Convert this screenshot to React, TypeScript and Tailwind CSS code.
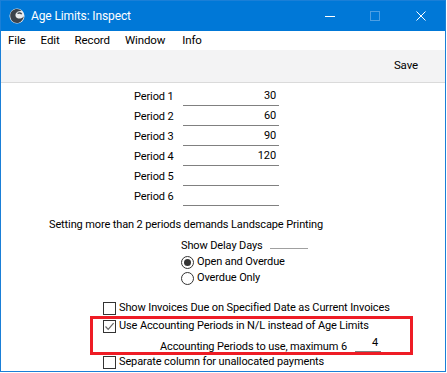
import React from "react";

const periods = [
  { label: "Period 1", value: "30" },
  { label: "Period 2", value: "60" },
  { label: "Period 3", value: "90" },
  { label: "Period 4", value: "120" },
  { label: "Period 5", value: "" },
  { label: "Period 6", value: "" },
];

const menus = [
  { label: "File", x: "ml-[7px]" },
  { label: "Edit", x: "ml-[15px]" },
  { label: "Record", x: "ml-[15px]" },
  { label: "Window", x: "ml-[15px]" },
  { label: "Info", x: "ml-[17px]" },
];

function AppIcon() {
  return (
    <svg width="16" height="16" viewBox="0 0 16 16">
      <circle cx="8" cy="8" r="7.5" fill="#e9ecef" />
      <path d="M1.2 7 C1.5 3.5 4.5 1 8 1 C10 1 11.5 1.8 12.5 3 C10.5 2.6 8 3.4 6.8 5.4 C5.8 7.4 6.8 9.8 9.2 10.4 C11.4 11 13.6 9.8 14.8 8.2 C14.3 12 11.3 15 8 15 C4.2 15 1 12 1.2 7 Z" fill="#3d434b" />
      <path d="M8.5 5.5 C10 4.6 12 5 12.6 6.2" fill="none" stroke="#3d434b" strokeWidth="1.4" />
    </svg>
  );
}

function Checkbox({ checked }: { checked?: boolean }) {
  return (
    <div className="flex h-[13px] w-[13px] shrink-0 items-center justify-center border border-[#333333] bg-white">
      {checked ? (
        <svg width="11" height="11" viewBox="0 0 11 11">
          <path d="M1.5 5.5 L4.2 8.3 L9.6 2.2" fill="none" stroke="#666666" strokeWidth="1.2" />
        </svg>
      ) : null}
    </div>
  );
}

function Radio({ selected }: { selected?: boolean }) {
  return (
    <div className="flex h-[13px] w-[13px] shrink-0 items-center justify-center rounded-full border border-[#333333] bg-white">
      {selected ? <div className="h-[7px] w-[7px] rounded-full bg-[#333333]" /> : null}
    </div>
  );
}

export default function App() {
  return (
    <div
      className="relative h-[372px] w-[446px] border border-[#1a7fd7] bg-white text-[11px] tracking-[-0.12px] text-black"
      style={{ fontFamily: 'Roboto, "Noto Sans", sans-serif' }}
    >
      {/* title bar */}
      <div className="flex h-[30px] items-center bg-[#0078d7] text-white">
        <div className="ml-[8px]">
          <AppIcon />
        </div>
        <span className="ml-[6px] text-[12px]">Age Limits: Inspect</span>
        <div className="ml-auto flex items-center">
          <div className="mr-[35px] h-px w-[10px] bg-white" />
          <div className="mr-[36px] h-[10px] w-[10px] border border-[#4d9fe3]" />
          <svg width="10" height="10" viewBox="0 0 10 10" className="mr-[19px]">
            <path d="M0.5 0.5 L9.5 9.5 M9.5 0.5 L0.5 9.5" stroke="#ffffff" strokeWidth="1" />
          </svg>
        </div>
      </div>

      {/* menu bar */}
      <div className="flex h-[19px] items-center bg-white text-[11.5px]">
        {menus.map((m) => (
          <span key={m.label} className={m.x}>
            {m.label}
          </span>
        ))}
      </div>

      {/* toolbar */}
      <div className="flex h-[33px] items-center justify-end border-b border-[#dadada] bg-[#f3f3f4] pr-[27px]">
        <span className="text-[11.5px]">Save</span>
      </div>

      {/* periods */}
      <div className="flex flex-col pt-[4px]">
        {periods.map((p) => (
          <div key={p.label} className="flex h-[20px] items-center">
            <span className="ml-[133px] w-[49px]">{p.label}</span>
            <div className="flex h-[17px] w-[96px] items-center justify-end border-b border-[#808080] pr-[3px]">
              {p.value}
            </div>
          </div>
        ))}
      </div>

      <div className="mt-[8px] flex h-[20px] items-center pl-[48px]">
        Setting more than 2 periods demands Landscape Printing
      </div>

      <div className="mt-[3px] flex h-[16px] items-center pl-[180px]">
        <span>Show Delay Days</span>
        <div className="ml-[7px] mt-[4px] h-px w-[38px] bg-[#a0a0a0]" />
      </div>
      <div className="flex h-[16px] items-center pl-[180px]">
        <Radio selected />
        <span className="ml-[3px]">Open and Overdue</span>
      </div>
      <div className="flex h-[16px] items-center pl-[180px]">
        <Radio />
        <span className="ml-[3px]">Overdue Only</span>
      </div>

      <div className="mt-[14px] flex h-[16px] items-center pl-[102px]">
        <Checkbox />
        <span className="ml-[3px]">Show Invoices Due on Specified Date as Current Invoices</span>
      </div>
      <div className="mt-[2px] flex h-[16px] items-center pl-[102px]">
        <Checkbox checked />
        <span className="ml-[3px]">Use Accounting Periods in N/L instead of Age Limits</span>
      </div>
      <div className="mt-[3px] flex h-[18px] items-start pl-[159px]">
        <span className="mt-[2px]">Accounting Periods to use, maximum 6</span>
        <div className="ml-[8px] flex h-[15px] w-[26px] items-end justify-end border-b border-[#808080] pr-[3px]">
          4
        </div>
      </div>
      <div className="mt-[-1px] flex h-[16px] items-center pl-[102px]">
        <Checkbox />
        <span className="ml-[3px]">Separate column for unallocated payments</span>
      </div>

      {/* highlight box */}
      <div className="absolute left-[89px] top-[315px] h-[39px] w-[323px] border-[3px] border-[#ee1c25]" />
    </div>
  );
}
